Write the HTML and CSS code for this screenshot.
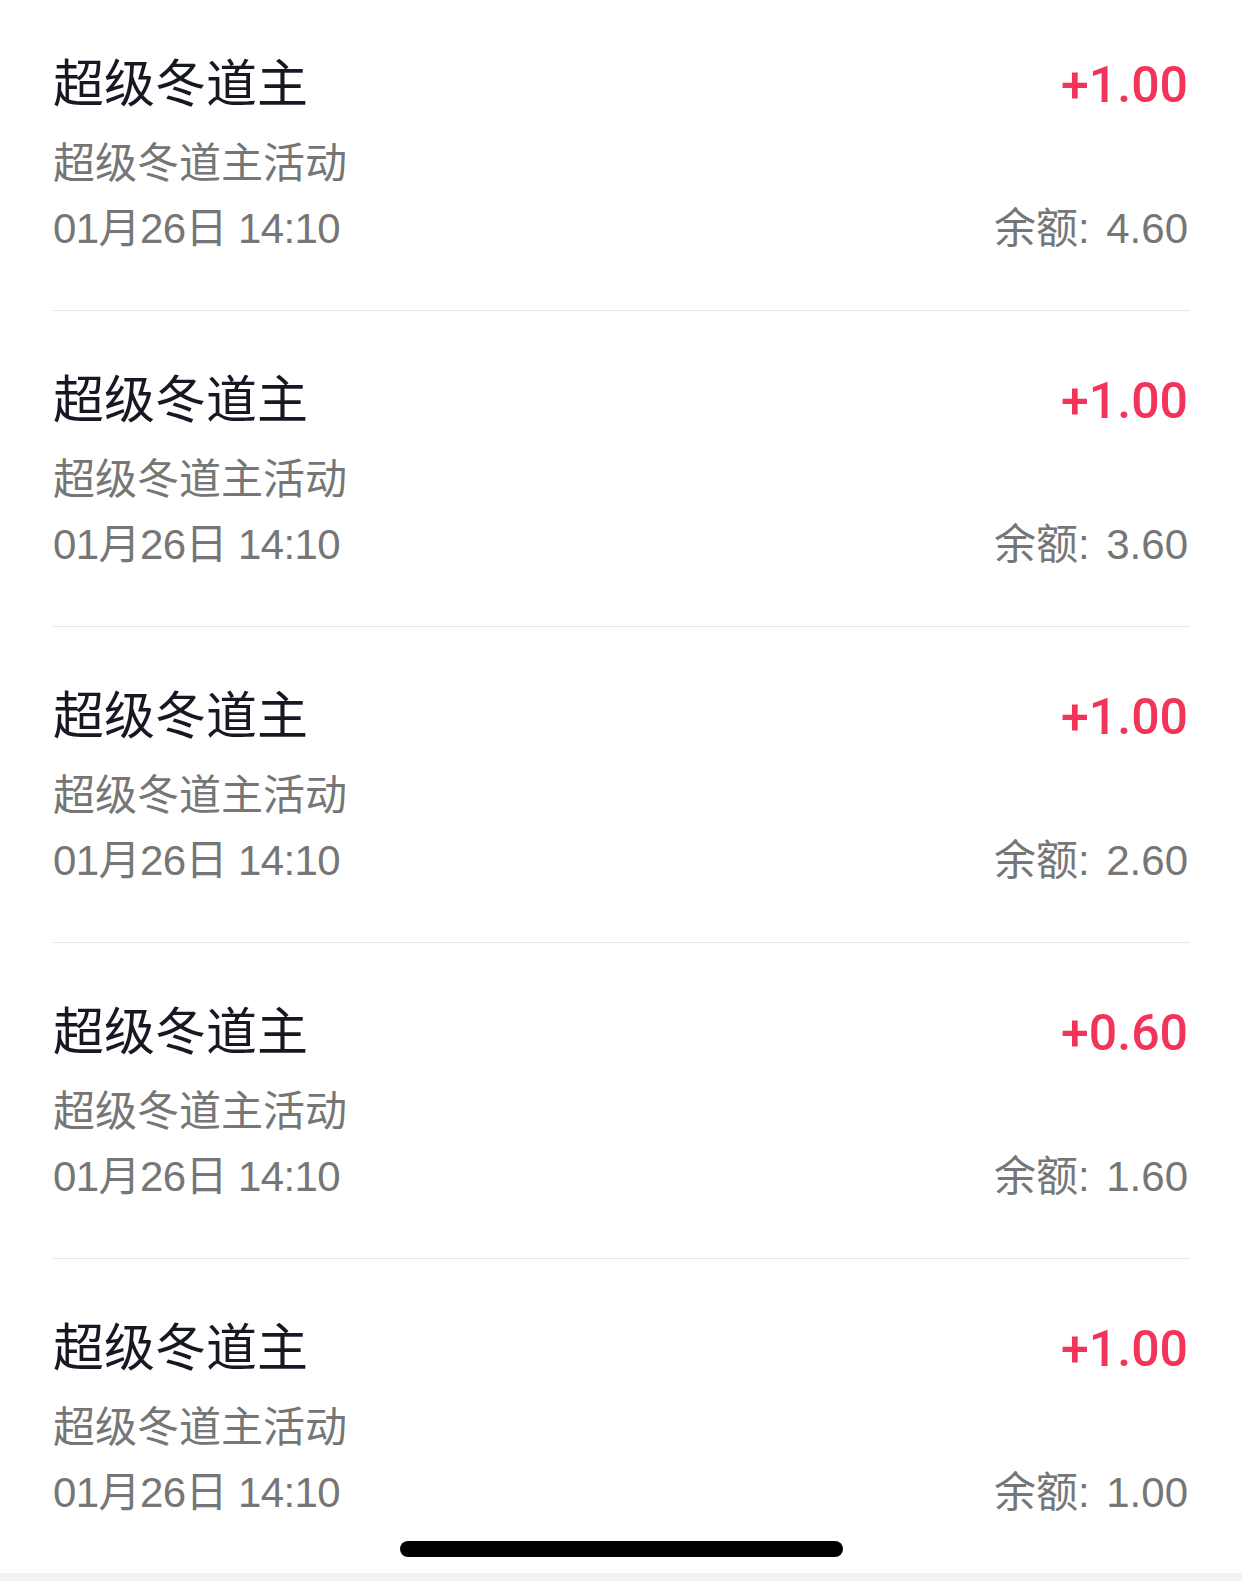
FILE: index.html
```html
<!DOCTYPE html>
<html lang="zh-CN">

<head>
    <meta charset="UTF-8">
    <meta name="viewport" content="width=device-width, initial-scale=1.0">
    <title>收支明细</title>
    <link rel="stylesheet" href="styles.css">
</head>

<body>
    <div class="page">
        <!-- 明细列表 -->
        <ul class="record-list">
            <li class="record">
                <div class="row">
                    <span class="title">超级冬道主</span>
                    <span class="amount">+1.00</span>
                </div>
                <div class="desc">超级冬道主活动</div>
                <div class="row meta">
                    <span class="time">01月26日 14:10</span>
                    <span class="balance">余额: 4.60</span>
                </div>
            </li>
            <li class="record">
                <div class="row">
                    <span class="title">超级冬道主</span>
                    <span class="amount">+1.00</span>
                </div>
                <div class="desc">超级冬道主活动</div>
                <div class="row meta">
                    <span class="time">01月26日 14:10</span>
                    <span class="balance">余额: 3.60</span>
                </div>
            </li>
            <li class="record">
                <div class="row">
                    <span class="title">超级冬道主</span>
                    <span class="amount">+1.00</span>
                </div>
                <div class="desc">超级冬道主活动</div>
                <div class="row meta">
                    <span class="time">01月26日 14:10</span>
                    <span class="balance">余额: 2.60</span>
                </div>
            </li>
            <li class="record">
                <div class="row">
                    <span class="title">超级冬道主</span>
                    <span class="amount">+0.60</span>
                </div>
                <div class="desc">超级冬道主活动</div>
                <div class="row meta">
                    <span class="time">01月26日 14:10</span>
                    <span class="balance">余额: 1.60</span>
                </div>
            </li>
            <li class="record last">
                <div class="row">
                    <span class="title">超级冬道主</span>
                    <span class="amount">+1.00</span>
                </div>
                <div class="desc">超级冬道主活动</div>
                <div class="row meta">
                    <span class="time">01月26日 14:10</span>
                    <span class="balance">余额: 1.00</span>
                </div>
            </li>
        </ul>
        <!-- 底部灰条 -->
        <div class="bottom-strip"></div>
        <!-- Home 指示条 -->
        <div class="home-bar"></div>
    </div>
</body>

</html>
```

FILE: styles.css
```css
* {
    margin: 0;
    padding: 0;
    box-sizing: border-box;
}

body {
    background-color: #fff;
    font-family: "Liberation Sans", "Noto Sans CJK SC", sans-serif;
}

.page {
    width: 1242px;
    height: 1581px;
    position: relative;
    overflow: hidden;
    display: flex;
    flex-direction: column;
}

.record-list {
    list-style: none;
    flex: 1;
    margin-top: -5px;
}

.record {
    margin: 0 52px 0 53px;
    padding: 60px 2px 52px 0;
    border-bottom: 1px solid #e6e6e6;
}

.record.last {
    border-bottom: none;
    padding-bottom: 51px;
}

.row {
    display: flex;
    justify-content: space-between;
    align-items: center;
}

.title {
    font-size: 51px;
    line-height: 60px;
    color: #161823;
}

.amount {
    font-family: Roboto, "Liberation Sans", sans-serif;
    font-weight: 500;
    font-size: 50px;
    line-height: 60px;
    color: #f2335a;
}

.desc {
    margin-top: 20px;
    font-size: 42px;
    line-height: 58px;
    color: #767676;
}

.meta {
    margin-top: 7px;
    font-size: 42px;
    line-height: 58px;
    color: #767676;
}

.time {
    letter-spacing: -0.6px;
}

.balance {
    word-spacing: 5px;
}

.bottom-strip {
    height: 8px;
    background-color: #f2f2f2;
}

.home-bar {
    position: absolute;
    left: 400px;
    bottom: 24px;
    width: 443px;
    height: 16px;
    border-radius: 8px;
    background-color: #000;
}
```
